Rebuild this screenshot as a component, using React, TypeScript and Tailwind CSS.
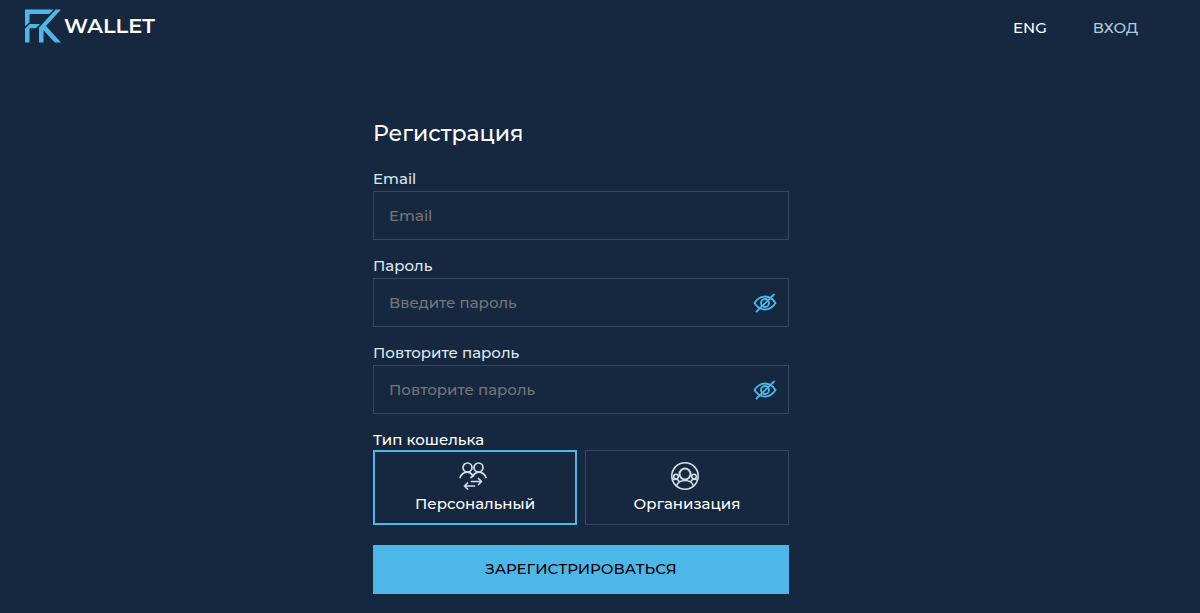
import React, { useState } from 'react';

type WalletType = 'personal' | 'organization';

const Logo = () => (
   <a href="/" className="flex items-center gap-[3px] text-white" aria-label="FK Wallet">
      <svg width="36" height="34" viewBox="0 0 36 34" fill="#4eb7e9">
         <path d="M0 0.500H28.500L24.200 5H4.500V13.200L0 17.600Z" />
         <path d="M4.800 15H15L10.800 19.300H4.500V33.500H0V19.800Z" />
         <path d="M30.500 0.500H36L21 17L36 33.500H29.800L18.500 21.200V33.500H14V18.800Z" />
      </svg>
      <span className="text-[21px] leading-8 font-semibold">WALLET</span>
   </a>
);

const EyeOffIcon = () => (
   <svg width="24" height="20" viewBox="0 0 24 20" fill="none" stroke="#4eb7e9" strokeWidth="1.8" strokeLinecap="round">
      <path d="M1.500 10C4 6 7.500 3.500 12 3.500S20 6 22.500 10C20 14 16.500 16.500 12 16.500S4 14 1.500 10Z" />
      <circle cx="12" cy="10" r="4" />
      <path d="M3.500 18.500L21 1.500" />
   </svg>
);

const PersonalIcon = () => (
   <svg width="28" height="28" viewBox="0 0 28 28" fill="none" stroke="#cfe2ea" strokeWidth="1.7" strokeLinecap="round" strokeLinejoin="round">
      <circle cx="8.500" cy="5.500" r="4.500" />
      <circle cx="19.500" cy="5.500" r="4.500" />
      <path d="M1 15.500C2.500 12 5 10.200 8.500 10.200S13 12.500 14 14C15 12.500 16 10.200 19.500 10.200S25.500 12 27 15.500" />
      <path d="M14 14L12 15.500" />
      <path d="M12.500 19.500H22.500M19.500 16.500L22.500 19.500L19.500 22.500M15.500 24H5.500M8.500 21L5.500 24L8.500 27" />
   </svg>
);

const OrganizationIcon = () => (
   <svg width="28" height="28" viewBox="0 0 28 28" fill="none" stroke="#cfe2ea" strokeWidth="1.600">
      <circle cx="14" cy="14" r="13.200" />
      <circle cx="14" cy="12" r="5.500" strokeWidth="2" />
      <circle cx="5" cy="14.500" r="2.300" />
      <circle cx="23" cy="14.500" r="2.300" />
      <path d="M5.500 24C6.500 20.500 10 18.500 14 18.500S21.500 20.500 22.500 24" />
      <path d="M1.500 18C4 16.500 7 17 8.500 20M26.500 18C24 16.500 21 17 19.500 20" />
   </svg>
);

const inputClass =
   'block h-[49px] w-full border border-[#34495f] bg-transparent px-[15px] text-[15px] text-white outline-none placeholder:text-[#757575] placeholder:opacity-100 focus:border-[#4eb7e9]';

type FieldProps = {
   id: string;
   label: string;
   placeholder: string;
   password?: boolean;
};

const Field: React.FC<FieldProps> = ({ id, label, placeholder, password }) => {
   const [visible, setVisible] = useState<boolean>(false);

   return (
      <div>
         <label htmlFor={id} className="mb-0.5 block leading-5 text-[#dbe9f1]">
            {label}
         </label>
         <div className="relative">
            <input
               id={id}
               type={password ? (visible ? 'text' : 'password') : 'email'}
               placeholder={placeholder}
               className={inputClass}
            />
            {password && (
               <button
                  type="button"
                  aria-label="Показать пароль"
                  onClick={() => setVisible(!visible)}
                  className="absolute inset-y-0 right-3 flex items-center"
               >
                  <EyeOffIcon />
               </button>
            )}
         </div>
      </div>
   );
};

const walletTypes: { value: WalletType; label: string; icon: React.ReactNode }[] = [
   { value: 'personal', label: 'Персональный', icon: <PersonalIcon /> },
   { value: 'organization', label: 'Организация', icon: <OrganizationIcon /> },
];

const App: React.FC = () => {
   const [walletType, setWalletType] = useState<WalletType>('personal');

   return (
      <div className="min-h-screen bg-[#16283f] font-['Montserrat','Inter',sans-serif] text-[15px] font-medium text-white">
         <header className="flex items-center justify-between pt-[9px] pr-[62px] pl-[25px]">
            <Logo />
            <nav className="flex items-center gap-[46px] pt-1">
               <a href="#eng">ENG</a>
               <a href="#login" className="text-[#b5cbd8]">ВХОД</a>
            </nav>
         </header>
         <main className="pt-[75px] pr-[38px] pb-[18px]">
            <form className="mx-auto w-full max-w-[416px]" onSubmit={(e) => e.preventDefault()}>
               <h1 className="mb-[19px] text-[22px] leading-8 font-medium">Регистрация</h1>
               <div className="flex flex-col gap-4">
                  <Field id="email" label="Email" placeholder="Email" />
                  <Field id="password" label="Пароль" placeholder="Введите пароль" password />
                  <Field id="repeat" label="Повторите пароль" placeholder="Повторите пароль" password />
                  <fieldset>
                     <legend className="leading-5">Тип кошелька</legend>
                     <div className="grid grid-cols-2 gap-2">
                        {walletTypes.map((type) => (
                           <label
                              key={type.value}
                              className={`flex h-[75px] cursor-pointer flex-col items-center justify-center gap-1 ${
                                 walletType === type.value ? 'border-2 border-[#4eb7e9]' : 'border border-[#34495f]'
                              }`}
                           >
                              <input
                                 type="radio"
                                 name="walletType"
                                 value={type.value}
                                 checked={walletType === type.value}
                                 onChange={() => setWalletType(type.value)}
                                 className="sr-only"
                              />
                              <span className="pr-1">{type.icon}</span>
                              <span className="leading-5">{type.label}</span>
                           </label>
                        ))}
                     </div>
                  </fieldset>
               </div>
               <button type="submit" className="mt-5 h-[49px] w-full bg-[#4eb7e9] text-black">
                  ЗАРЕГИСТРИРОВАТЬСЯ
               </button>
            </form>
         </main>
      </div>
   );
};

export default App;
